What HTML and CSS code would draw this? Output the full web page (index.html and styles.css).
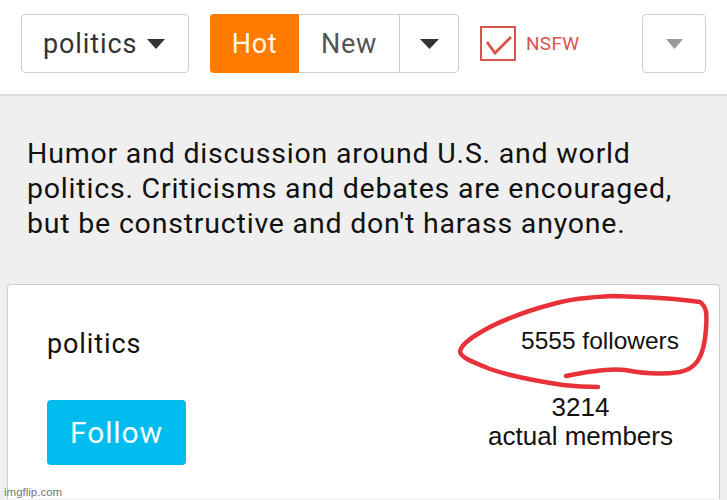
FILE: index.html
```html
<!DOCTYPE html>
<html lang="en">
<head>
    <meta charset="UTF-8">
    <meta name="viewport" content="width=device-width, initial-scale=1.0">
    <title>politics</title>
    <link rel="stylesheet" href="styles.css">
</head>
<body>
    <div class="topbar">
        <div class="select-box">
            <span>politics</span>
            <svg class="caret" width="18" height="10" viewBox="0 0 18 10"><path d="M0 0h18L9 10z" fill="#333"/></svg>
        </div>
        <div class="sort-group">
            <div class="sort-btn hot">Hot</div>
            <div class="sort-btn new">New</div>
            <div class="sort-btn more">
                <svg width="19" height="10" viewBox="0 0 19 10"><path d="M0 0h19L9.5 10z" fill="#333"/></svg>
            </div>
        </div>
        <label class="nsfw">
            <span class="checkbox">
                <svg width="32" height="31" viewBox="0 0 32 31"><path d="M5 14l8 11L29 9" fill="none" stroke="#d9534f" stroke-width="2.8"/></svg>
            </span>
            NSFW
        </label>
        <div class="menu-btn">
            <svg width="17" height="10" viewBox="0 0 17 10"><path d="M0 0h17L8.5 10z" fill="#9a9a9a"/></svg>
        </div>
    </div>

    <div class="content">
        <p class="description">Humor and discussion around U.S. and world politics. Criticisms and debates are encouraged, but be constructive and don't harass anyone.</p>

        <div class="card">
            <div class="card-left">
                <div class="stream-name">politics</div>
                <button class="follow-btn">Follow</button>
            </div>
            <div class="card-right">
                <div class="followers">5555 followers</div>
                <div class="members">3214<br>actual members</div>
            </div>
            <svg class="scribble" width="713" height="214" viewBox="7 285 713 214">
                <path d="M566 377 C590 372 610 369 625 371 C645 375 660 376 680 373 C695 370 704 360 706 330 C707 315 707 308 700 303 C680 300 650 298 613 297 C590 298 570 300 553 305 C530 311 510 318 490 328 C475 336 462 344 460 352 C460 358 470 362 490 370 C510 377 530 381 563 386 C580 388 590 388 598 388" fill="none" stroke="#e8323a" stroke-width="4.5" stroke-linecap="round" stroke-linejoin="round"/>
            </svg>
        </div>
    </div>

    <div class="watermark">imgflip.com</div>
</body>
</html>
```

FILE: styles.css
```css
body {
    margin: 0;
    padding: 0;
    width: 727px;
    height: 500px;
    overflow: hidden;
    font-family: Roboto, "Noto Sans", sans-serif;
    background: #efefef;
    position: relative;
}
.topbar {
    height: 80px;
    display: flex;
    align-items: flex-start;
    padding: 14px 21px 0;
    background: #fff;
    border-bottom: 2px solid #dcdcdc;
}
.select-box {
    height: 57px;
    border: 1px solid #cfcfcf;
    border-radius: 4px;
    display: flex;
    align-items: center;
    gap: 10px;
    padding-left: 21px;
    width: 145px;
    font-size: 27px;
    letter-spacing: 0.9px;
    color: #333;
}
.sort-group {
    margin-left: 21px;
    display: flex;
    height: 59px;
    border: 1px solid #cfcfcf;
    border-radius: 4px;
    box-sizing: border-box;
    width: 249px;
}
.sort-btn {
    display: flex;
    align-items: center;
    justify-content: center;
    font-size: 27px;
    letter-spacing: 0.7px;
    color: #555;
}
.sort-btn.hot {
    width: 89px;
    margin: -1px 0 -1px -1px;
    background: #ff7b00;
    color: #fff8e6;
    border-radius: 4px 0 0 4px;
}
.sort-btn.new {
    width: 100px;
    border-right: 1px solid #cfcfcf;
}
.sort-btn.more {
    flex: 1;
}
.nsfw {
    margin: 12px 0 0 21px;
    display: flex;
    align-items: center;
    gap: 10px;
    font-size: 19px;
    letter-spacing: 0.3px;
    color: #d9534f;
}
.checkbox {
    width: 32px;
    height: 31px;
    border: 2px solid #d9534f;
    display: block;
}
.checkbox svg {
    display: block;
}
.menu-btn {
    margin-left: auto;
    width: 62px;
    height: 57px;
    border: 1px solid #cfcfcf;
    border-radius: 4px;
    display: flex;
    align-items: center;
    justify-content: center;
}
.content {
    padding: 40px 7px 0;
}
.description {
    margin: 0 0 0 20px;
    width: 650px;
    font-size: 28.5px;
    letter-spacing: 0.8px;
    line-height: 35px;
    color: #111;
}
.card {
    position: relative;
    margin-top: 43px;
    height: 214px;
    background: #fff;
    border: 1px solid #cccccc;
    border-bottom: none;
    border-radius: 4px 4px 0 0;
    display: flex;
    justify-content: space-between;
    padding: 0 40px 0 39px;
}
.card-left {
    display: flex;
    flex-direction: column;
    align-items: flex-start;
    padding-top: 43px;
}
.stream-name {
    font-size: 27px;
    letter-spacing: 0.9px;
    color: #111;
}
.follow-btn {
    margin-top: 40px;
    width: 139px;
    height: 65px;
    border: none;
    border-radius: 4px;
    background: #00bcef;
    color: #f4fdff;
    font-family: Roboto, sans-serif;
    font-size: 30px;
    letter-spacing: 0.9px;
    padding: 0;
}
.card-right {
    display: flex;
    flex-direction: column;
    align-items: flex-end;
    padding-top: 42px;
    font-family: "Liberation Sans", Arial, sans-serif;
    color: #111;
}
.followers {
    font-size: 24.5px;
}
.members {
    margin-top: 38px;
    margin-right: 6px;
    text-align: center;
    font-size: 26px;
    line-height: 29px;
}
.scribble {
    position: absolute;
    left: -1px;
    top: -1px;
    pointer-events: none;
}
.watermark {
    position: absolute;
    left: 4px;
    bottom: 2px;
    font-family: "Liberation Sans", Arial, sans-serif;
    font-size: 11.5px;
    color: #777;
    text-shadow: 0 0 2px #fff;
}
```
